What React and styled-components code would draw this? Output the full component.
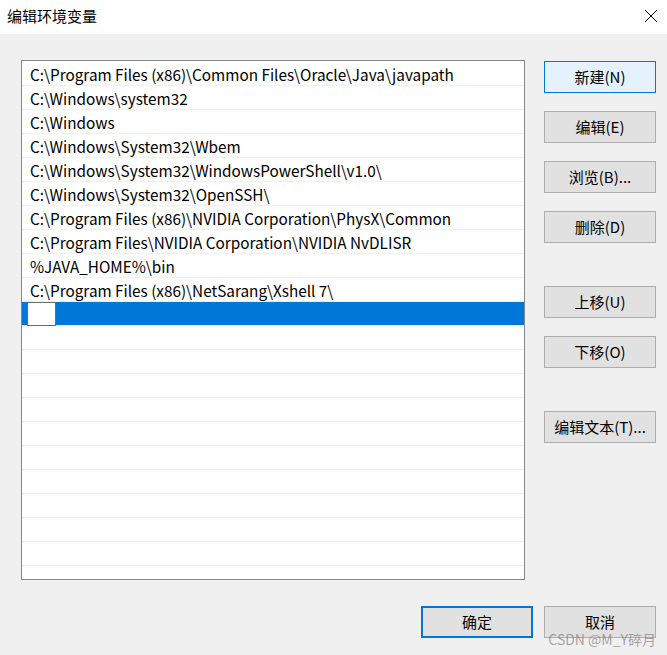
import React from "react";
import styled, { createGlobalStyle } from "styled-components";

const Global = createGlobalStyle`
  html, body { margin: 0; padding: 0; background: #f0f0f0; }
  body { font-family: "Noto Sans CJK SC", "Noto Sans", sans-serif; font-size: 15px; color: #000; }
  * { box-sizing: border-box; }
`;

const Window = styled.div`
  position: relative;
  width: 667px;
  height: 655px;
  background: #f0f0f0;
  overflow: hidden;
`;

const TitleBar = styled.div`
  height: 34px;
  background: #fff;
  display: flex;
  align-items: center;
  justify-content: space-between;
  padding: 0 8px 2px 7px;
`;

const Title = styled.div`
  font-size: 15px;
  line-height: 20px;
`;

const CloseBtn = styled.div`
  width: 14px;
  height: 14px;
  margin-right: 1px;
  display: flex;
`;

const Body = styled.div`
  display: flex;
  padding: 26px 0 0 21px;
  gap: 19px;
`;

const ListBox = styled.div`
  width: 504px;
  height: 520px;
  border: 1px solid #828790;
  background: #fff;
  padding-top: 1px;
  overflow: hidden;
`;

const Row = styled.div`
  height: 24px;
  border-bottom: 1px solid #f0f0f0;
  display: flex;
  align-items: center;
  padding-left: ${(p) => (p.$selected ? 5 : 8)}px;
  background: ${(p) => (p.$selected ? "#0078d7" : "#fff")};
  white-space: nowrap;
  font-size: 15.3px;
  line-height: 22px;
`;

const EditBox = styled.div`
  width: 29px;
  height: 24px;
  border: 1px solid #6c6c6c;
  background: #fff;
  align-self: flex-start;
`;

const ButtonCol = styled.div`
  display: flex;
  flex-direction: column;
  padding-top: 1px;
`;

const Button = styled.div`
  width: 112px;
  height: 32px;
  margin-top: ${(p) => p.$mt || 0}px;
  display: flex;
  align-items: center;
  justify-content: center;
  background: ${(p) => (p.$hover ? "#e5f1fb" : "#e1e1e1")};
  border: ${(p) => (p.$default ? "2px solid #0078d7" : p.$hover ? "1px solid #0078d7" : "1px solid #adadad")};
  font-size: 15px;
  line-height: 20px;
  white-space: nowrap;
`;

const Footer = styled.div`
  display: flex;
  justify-content: flex-end;
  gap: 11px;
  padding: 26px 11px 0 0;
`;

const Watermark = styled.div`
  position: absolute;
  right: 11px;
  bottom: 6px;
  font-size: 14px;
  color: rgba(110, 110, 110, 0.6);
  white-space: nowrap;
  font-family: "Noto Sans CJK SC", "Noto Sans", sans-serif;
`;

const paths = [
  "C:\\Program Files (x86)\\Common Files\\Oracle\\Java\\javapath",
  "C:\\Windows\\system32",
  "C:\\Windows",
  "C:\\Windows\\System32\\Wbem",
  "C:\\Windows\\System32\\WindowsPowerShell\\v1.0\\",
  "C:\\Windows\\System32\\OpenSSH\\",
  "C:\\Program Files (x86)\\NVIDIA Corporation\\PhysX\\Common",
  "C:\\Program Files\\NVIDIA Corporation\\NVIDIA NvDLISR",
  "%JAVA_HOME%\\bin",
  "C:\\Program Files (x86)\\NetSarang\\Xshell 7\\",
];

export default function App() {
  const empties = Array.from({ length: 11 });
  return (
    <Window>
      <Global />
      <TitleBar>
        <Title>编辑环境变量</Title>
        <CloseBtn>
          <svg width="14" height="14" viewBox="0 0 14 14">
            <path d="M1 1 L13 13 M13 1 L1 13" stroke="#000" strokeWidth="1" fill="none" />
          </svg>
        </CloseBtn>
      </TitleBar>
      <Body>
        <ListBox>
          {paths.map((p) => (
            <Row key={p}>{p}</Row>
          ))}
          <Row $selected>
            <EditBox />
          </Row>
          {empties.map((_, i) => (
            <Row key={"e" + i} />
          ))}
        </ListBox>
        <ButtonCol>
          <Button $hover>新建(N)</Button>
          <Button $mt={18}>编辑(E)</Button>
          <Button $mt={18}>浏览(B)...</Button>
          <Button $mt={18}>删除(D)</Button>
          <Button $mt={43}>上移(U)</Button>
          <Button $mt={18}>下移(O)</Button>
          <Button $mt={43}>编辑文本(T)...</Button>
        </ButtonCol>
      </Body>
      <Footer>
        <Button $default>确定</Button>
        <Button>取消</Button>
      </Footer>
      <Watermark>CSDN @M_Y碎月</Watermark>
    </Window>
  );
}
